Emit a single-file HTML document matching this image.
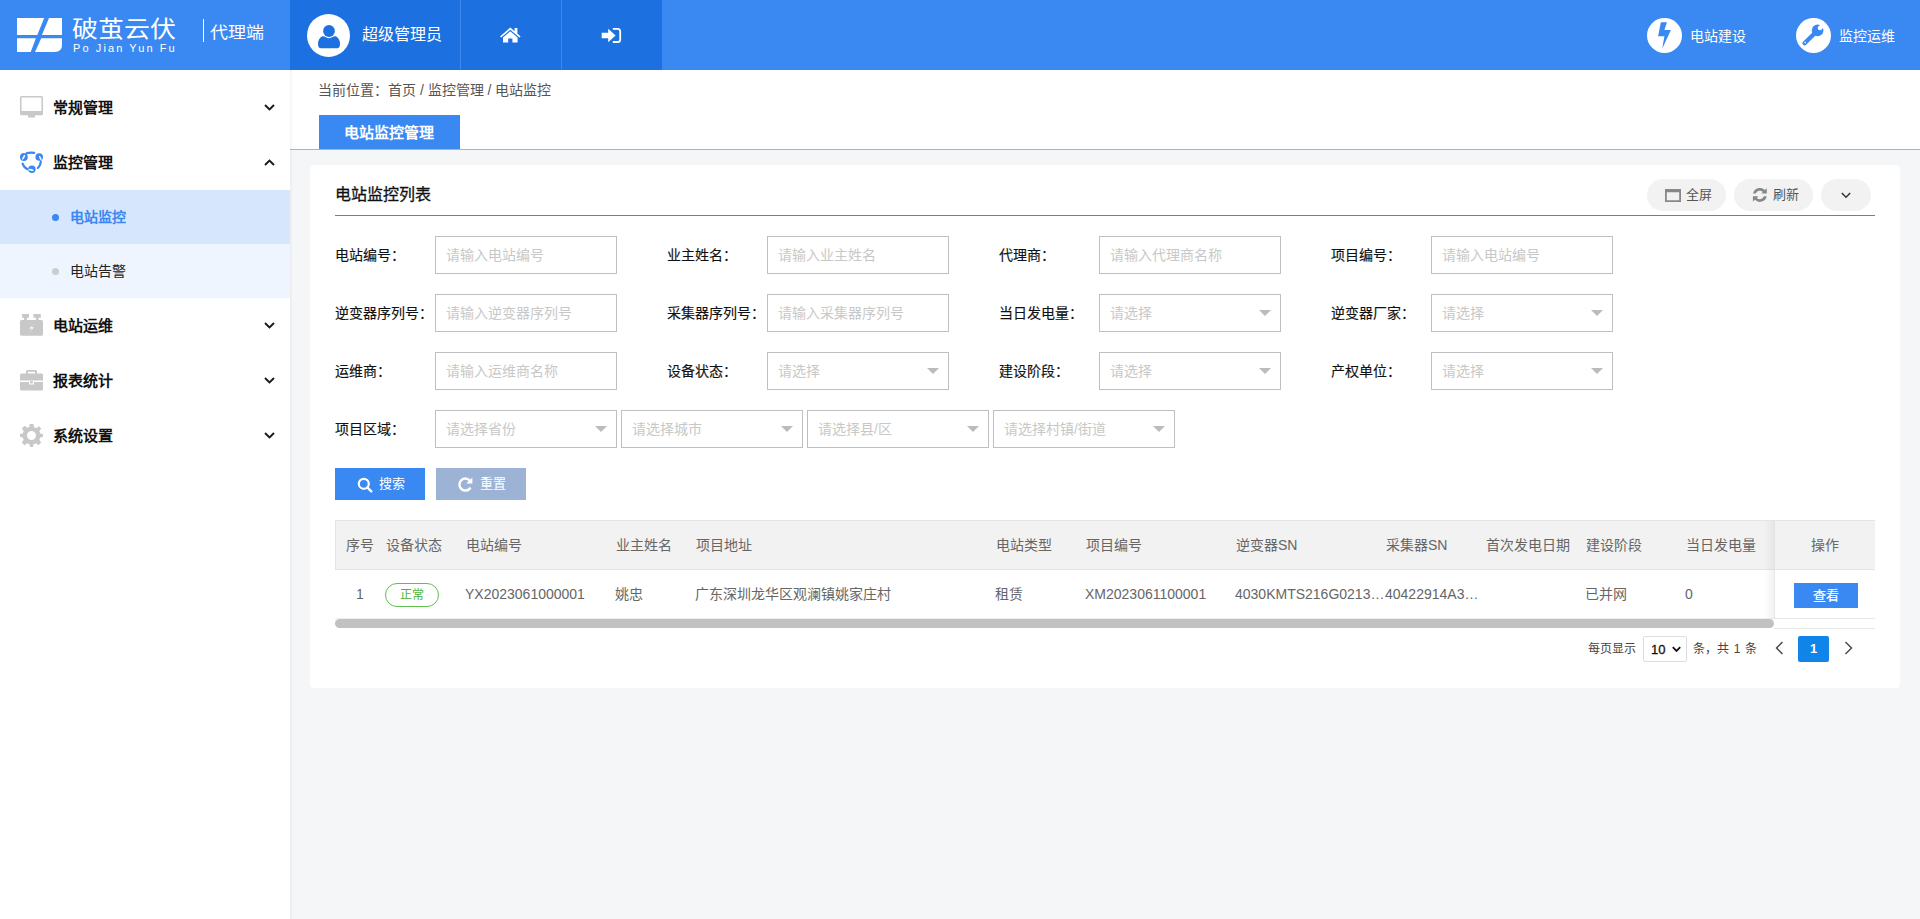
<!DOCTYPE html>
<html lang="zh-CN"><head><meta charset="utf-8">
<style>
*{box-sizing:border-box;margin:0;padding:0}
html,body{width:1920px;height:919px;overflow:hidden;background:#f5f6f8;font-family:"Liberation Sans",sans-serif;}
.abs{position:absolute}
#hdr{position:absolute;left:0;top:0;width:1920px;height:70px;background:#3a88f1}
#hdark{position:absolute;left:290px;top:0;width:372px;height:70px;background:#1c70e0}
.sep{position:absolute;top:0;width:1px;height:70px;background:#3d87ee}
.wt{color:#fff;white-space:nowrap;line-height:1}
#side{position:absolute;left:0;top:70px;width:290px;height:849px;background:#fff}
.mi{position:absolute;left:0;width:290px;height:55px}
.mi .t{position:absolute;left:53px;top:0;line-height:55px;font-size:15px;font-weight:bold;color:#111;white-space:nowrap}
.mi svg.ic{position:absolute;left:20px}
.mi svg.ch{position:absolute;left:264px;top:24px}
.sub{position:absolute;left:0;width:290px;height:54px}
.sub .t{position:absolute;left:70px;top:0;line-height:54px;font-size:14px;white-space:nowrap}
.sub .d{position:absolute;left:52px;top:24px;width:7px;height:7px;border-radius:50%}
#crumb{position:absolute;left:290px;top:70px;width:1630px;height:80px;background:#fff;border-bottom:1px solid #8cb9f4}
#card{position:absolute;left:310px;top:165px;width:1590px;height:523px;background:#fff;border-radius:4px}
.lbl{position:absolute;font-size:14px;color:#111;-webkit-text-stroke:0.15px #111;line-height:14px;white-space:nowrap}
.inp{position:absolute;width:182px;height:38px;border:1px solid #bfbfbf;background:#fff}
.inp span{position:absolute;left:10px;top:0;line-height:36px;font-size:14px;color:#c8c8c8;white-space:nowrap}
.inp i{position:absolute;right:9px;top:15px;width:0;height:0;border-left:6px solid transparent;border-right:6px solid transparent;border-top:6px solid #bbb}
.pill{position:absolute;top:14px;height:32px;border-radius:16px;background:#f2f2f2}
.pill span{position:absolute;top:0;line-height:32px;font-size:13px;color:#555;white-space:nowrap}
.th{position:absolute;top:0;line-height:49px;font-size:14px;color:#666;white-space:nowrap}
.td{position:absolute;top:0;line-height:48px;font-size:14px;color:#666;white-space:nowrap}
</style></head>
<body>
<!-- HEADER -->
<div id="hdr">
  <svg class="abs" style="left:17px;top:18px" width="45" height="34" viewBox="0 0 45 34">
    <path fill="#fff" d="M0 0H27.2L20.3 17H0Z M32 0H45V17H24.9Z M0 20.2H18.9L13.7 34H0Z M24.2 20.2H45V27Q45 34 37.5 34H18Z"/>
  </svg>
  <div class="abs wt" style="left:72px;top:14.4px;font-size:26px;line-height:30px;transform:scaleY(0.86)">破茧云伏</div>
  <div class="abs wt" style="left:73px;top:43px;font-size:11px;letter-spacing:2.1px;line-height:10px">Po Jian Yun Fu</div>
  <div class="abs" style="left:203px;top:19px;width:1px;height:23px;background:#fff"></div>
  <div class="abs wt" style="left:210px;top:21.5px;font-size:18px;line-height:22px;transform:scaleY(0.89)">代理端</div>
</div>
<div id="hdark">
  <div class="sep" style="left:170px"></div>
  <div class="sep" style="left:271px"></div>
</div>
<svg class="abs" style="left:307px;top:14px" width="43" height="43" viewBox="0 0 43 43">
  <circle cx="21.5" cy="21.5" r="21.5" fill="#fff"/>
  <circle cx="22" cy="17" r="5.9" fill="#1c70e0"/>
  <path fill="#1c70e0" d="M15 22.3Q17 22 19 23.3Q22 25 25 23.3Q27 22 29 22.3Q33 25 33 30Q33 34.2 30 34.2H14Q11 34.2 11 30Q11 25 15 22.3Z"/>
</svg>
<div class="abs wt" style="left:362px;top:26px;font-size:16px;line-height:18px">超级管理员</div>
<!-- home -->
<svg class="abs" style="left:500px;top:27px" width="21" height="16" viewBox="0 0 21 16">
  <path fill="#fff" d="M10.3 0.4L0 9.4L1.2 10.6L10.3 2.7L19.4 10.6L20.6 9.4L17.4 6.6V0.9H14.6V4.2Z"/>
  <path fill="#fff" d="M10.3 4.2L3 10.5V15.6H8.2V11.4H12.4V15.6H17.6V10.5Z"/>
</svg>
<!-- sign in -->
<svg class="abs" style="left:601px;top:27px" width="21" height="17" viewBox="0 0 21 17">
  <path fill="#fff" d="M0.7 5.8H7.2V1.7L14.6 8.5L7.2 15.3V11.2H0.7Z"/>
  <path fill="none" stroke="#fff" stroke-width="1.8" d="M11.8 1.8H16.6Q19.2 1.8 19.2 4.4V12.4Q19.2 15 16.6 15H11.8"/>
</svg>
<!-- right header -->
<svg class="abs" style="left:1647px;top:18px" width="35" height="35" viewBox="0 0 35 35">
  <circle cx="17.5" cy="17.5" r="17.5" fill="#fff"/>
  <path fill="#3a88f1" d="M13.9 4.2H19.9L17.4 12H23.9L15.2 30.7L17.4 18.3H11.1Z"/>
</svg>
<div class="abs wt" style="left:1690px;top:29px;font-size:14px;line-height:14px">电站建设</div>
<svg class="abs" style="left:1796px;top:18px" width="35" height="35" viewBox="0 0 35 35">
  <circle cx="17.5" cy="17.5" r="17.5" fill="#fff"/>
  <circle cx="21.6" cy="12.4" r="5.8" fill="#3a88f1"/><path d="M18.5 15.5L8.6 25.2" stroke="#3a88f1" stroke-width="4.4" stroke-linecap="round"/>
  <circle cx="23.9" cy="10.1" r="2.2" fill="#fff"/><path d="M22.4 8.6L25.5 5.5L28.5 8.5L25.4 11.6Z" fill="#fff"/>
  <circle cx="9.2" cy="24.6" r="0.8" fill="#fff"/>
</svg>
<div class="abs wt" style="left:1839px;top:29px;font-size:14px;line-height:14px">监控运维</div>

<!-- SIDEBAR -->
<div id="side">
  <div class="mi" style="top:10px">
    <svg class="ic" style="top:16px" width="23" height="23" viewBox="0 0 23 23">
      <path fill="#c8c8c8" d="M1.5 0H21.5Q23 0 23 1.5V17.8Q23 19.3 21.5 19.3H15V21.5H8V19.3H1.5Q0 19.3 0 17.8V1.5Q0 0 1.5 0ZM1.5 1.5V15H21.5V1.5Z"/>
    </svg>
    <div class="t">常规管理</div>
    <svg class="ch" width="11" height="7" viewBox="0 0 11 7"><path d="M1 1L5.5 5.5L10 1" fill="none" stroke="#1a1a1a" stroke-width="1.9"/></svg>
  </div>
  <div class="mi" style="top:65px">
    <svg class="ic" style="top:16px" width="23" height="23" viewBox="0 0 23 23">
      <g fill="none" stroke="#3a88f1" stroke-width="2.1" stroke-linecap="round">
        <path d="M6.5 2.3Q10 1.3 14.2 1.9"/>
        <path d="M20.8 10.4Q20.6 14.5 17.8 17"/>
        <path d="M2.6 12.6Q3.8 16.6 7.6 18.2"/>
      </g>
      <g fill="#3a88f1">
        <circle cx="3.9" cy="6" r="3.9"/>
        <circle cx="19.2" cy="6" r="3.8"/>
        <circle cx="11.9" cy="18.2" r="3.7"/>
      </g>
      <g fill="#fff">
        <ellipse cx="3.6" cy="6.3" rx="0.85" ry="2.8" transform="rotate(30 3.6 6.3)"/>
        <ellipse cx="20.3" cy="7" rx="0.85" ry="2.4" transform="rotate(-25 20.3 7)"/>
        <ellipse cx="11" cy="18.9" rx="2.6" ry="0.85" transform="rotate(12 11 18.9)"/>
      </g>
    </svg>
    <div class="t">监控管理</div>
    <svg class="ch" width="11" height="7" viewBox="0 0 11 7"><path d="M1 6L5.5 1.5L10 6" fill="none" stroke="#1a1a1a" stroke-width="1.9"/></svg>
  </div>
  <div class="sub" style="top:120px;background:#d5e6fd">
    <div class="d" style="background:#3a88f1"></div>
    <div class="t" style="color:#3a88f1;font-weight:bold">电站监控</div>
  </div>
  <div class="sub" style="top:174px;background:#eef5fe">
    <div class="d" style="background:#ccc"></div>
    <div class="t" style="color:#222">电站告警</div>
  </div>
  <div class="mi" style="top:228px">
    <svg class="ic" style="top:16px" width="23" height="23" viewBox="0 0 23 23">
      <path fill="#c8c8c8" d="M1.5 6H21.5Q23 6 23 7.5V20.3Q23 21.8 21.5 21.8H1.5Q0 21.8 0 20.3V7.5Q0 6 1.5 6Z M2.1 0.1H9V3.8H6.9V6H4.1V3.8H2.1Z M13.4 0.1H20.8V3.8H18.6V6H16V3.8H13.4Z"/>
      <path fill="#fff" d="M14.2 9.7L9.2 14.6H12.2L8.8 19.6L13.9 13.3H11.1Z"/>
    </svg>
    <div class="t">电站运维</div>
    <svg class="ch" width="11" height="7" viewBox="0 0 11 7"><path d="M1 1L5.5 5.5L10 1" fill="none" stroke="#1a1a1a" stroke-width="1.9"/></svg>
  </div>
  <div class="mi" style="top:283px">
    <svg class="ic" style="top:17px" width="23" height="21" viewBox="0 0 23 21">
      <path fill="#c8c8c8" d="M7.5 0H15.5Q17 0 17 1.5V3.5H21.5Q23 3.5 23 5V10.5H0V5Q0 3.5 1.5 3.5H6V1.5Q6 0 7.5 0ZM8 1.7V3.5H15V1.7Z"/>
      <path fill="#c8c8c8" d="M0 12H9V14.5H14V12H23V19Q23 20.5 21.5 20.5H1.5Q0 20.5 0 19Z"/>
      <path fill="#c8c8c8" d="M10.2 11H12.8V13.5H10.2Z"/>
    </svg>
    <div class="t">报表统计</div>
    <svg class="ch" width="11" height="7" viewBox="0 0 11 7"><path d="M1 1L5.5 5.5L10 1" fill="none" stroke="#1a1a1a" stroke-width="1.9"/></svg>
  </div>
  <div class="mi" style="top:338px">
    <svg class="ic" style="top:16px" width="23" height="23" viewBox="0 0 23 23">
      <path fill="#c8c8c8" fill-rule="evenodd" d="M9.5 0H13.5L14 3.2L16.3 4.2L19 2.3L21.2 4.5L19.3 7.2L20.3 9.5L23 10V13L20.3 13.5L19.3 15.8L21.2 18.5L18.5 21.2L15.8 19.3L13.5 20.3L13 23H10L9.5 20.3L7.2 19.3L4.5 21.2L1.8 18.5L3.7 15.8L2.7 13.5L0 13V10L2.7 9.5L3.7 7.2L1.8 4.5L4.5 1.8L7.2 3.7L9.5 2.7Z M11.5 7A4.5 4.5 0 1 0 11.5 16A4.5 4.5 0 1 0 11.5 7Z"/>
    </svg>
    <div class="t">系统设置</div>
    <svg class="ch" width="11" height="7" viewBox="0 0 11 7"><path d="M1 1L5.5 5.5L10 1" fill="none" stroke="#1a1a1a" stroke-width="1.9"/></svg>
  </div>
</div>
<div class="abs" style="left:290px;top:70px;width:3px;height:849px;z-index:5;background:linear-gradient(90deg,rgba(0,0,0,0.045),rgba(0,0,0,0))"></div>

<!-- BREADCRUMB -->
<div id="crumb">
  <div class="abs" style="left:28px;top:13px;font-size:14px;color:#555;line-height:14px;white-space:nowrap">当前位置：首页 / 监控管理 / 电站监控</div>
  <div class="abs" style="left:29px;top:45px;width:141px;height:34px;background:#3a88f1"></div>
  <div class="abs wt" style="left:54px;top:55px;font-size:15px;font-weight:bold;line-height:15px">电站监控管理</div>
</div>

<!-- CARD -->
<div id="card">
  <div class="abs" style="left:25px;top:21px;font-size:16px;line-height:18px;color:#111;-webkit-text-stroke:0.3px #111;white-space:nowrap">电站监控列表</div>
  <div class="abs" style="left:25px;top:50px;width:1540px;height:1px;background:#3a88f1"></div>
  <div class="pill" style="left:1337px;width:79px">
    <svg class="abs" style="left:18px;top:10px" width="16" height="13" viewBox="0 0 16 13"><path fill="#888" d="M0 0H16V13H0ZM1.8 3.2V11.2H14.2V3.2Z"/></svg>
    <span style="left:39px">全屏</span>
  </div>
  <div class="pill" style="left:1424px;width:79px">
    <svg class="abs" style="left:18px;top:9px" width="16" height="15" viewBox="0 0 16 15"><g fill="#888"><path d="M1.02 5.6A6.95 6.95 0 0 1 12.76 1.99L14.8 0.3V5.6H9.4L10.85 3.9A4.25 4.25 0 0 0 3.8 5.6Z"/><path d="M14.68 8.2A6.95 6.95 0 0 1 2.94 11.81L0.9 13.5V8.2H6.3L4.85 9.9A4.25 4.25 0 0 0 11.9 8.2Z"/></g></svg>
    <span style="left:39px">刷新</span>
  </div>
  <div class="pill" style="left:1511px;width:50px">
    <svg class="abs" style="left:20px;top:13px" width="10" height="7" viewBox="0 0 10 7"><path d="M0.8 1L5 5.2L9.2 1" fill="none" stroke="#333" stroke-width="1.5"/></svg>
  </div>
  <div class="lbl" style="left:25px;top:83px">电站编号：</div>
  <div class="inp" style="left:125px;top:71px"><span>请输入电站编号</span></div>
  <div class="lbl" style="left:357px;top:83px">业主姓名：</div>
  <div class="inp" style="left:457px;top:71px"><span>请输入业主姓名</span></div>
  <div class="lbl" style="left:689px;top:83px">代理商：</div>
  <div class="inp" style="left:789px;top:71px"><span>请输入代理商名称</span></div>
  <div class="lbl" style="left:1021px;top:83px">项目编号：</div>
  <div class="inp" style="left:1121px;top:71px"><span>请输入电站编号</span></div>
  <div class="lbl" style="left:25px;top:141px">逆变器序列号：</div>
  <div class="inp" style="left:125px;top:129px"><span>请输入逆变器序列号</span></div>
  <div class="lbl" style="left:357px;top:141px">采集器序列号：</div>
  <div class="inp" style="left:457px;top:129px"><span>请输入采集器序列号</span></div>
  <div class="lbl" style="left:689px;top:141px">当日发电量：</div>
  <div class="inp" style="left:789px;top:129px"><span>请选择</span><i></i></div>
  <div class="lbl" style="left:1021px;top:141px">逆变器厂家：</div>
  <div class="inp" style="left:1121px;top:129px"><span>请选择</span><i></i></div>
  <div class="lbl" style="left:25px;top:199px">运维商：</div>
  <div class="inp" style="left:125px;top:187px"><span>请输入运维商名称</span></div>
  <div class="lbl" style="left:357px;top:199px">设备状态：</div>
  <div class="inp" style="left:457px;top:187px"><span>请选择</span><i></i></div>
  <div class="lbl" style="left:689px;top:199px">建设阶段：</div>
  <div class="inp" style="left:789px;top:187px"><span>请选择</span><i></i></div>
  <div class="lbl" style="left:1021px;top:199px">产权单位：</div>
  <div class="inp" style="left:1121px;top:187px"><span>请选择</span><i></i></div>
  <div class="lbl" style="left:25px;top:257px">项目区域：</div>
  <div class="inp" style="left:125px;top:245px"><span>请选择省份</span><i></i></div>
  <div class="inp" style="left:311px;top:245px"><span>请选择城市</span><i></i></div>
  <div class="inp" style="left:497px;top:245px"><span>请选择县/区</span><i></i></div>
  <div class="inp" style="left:683px;top:245px"><span>请选择村镇/街道</span><i></i></div>
  <div class="abs" style="left:25px;top:303px;width:90px;height:32px;background:#3a88f1">
    <svg class="abs" style="left:22px;top:9px" width="16" height="16" viewBox="0 0 16 16"><circle cx="6.8" cy="6.8" r="5" fill="none" stroke="#fff" stroke-width="2.2"/><path d="M10.3 10.3L14.3 14.3" stroke="#fff" stroke-width="2.4" stroke-linecap="round"/></svg>
    <div class="abs wt" style="left:44px;top:9px;font-size:13px;line-height:14px">搜索</div>
  </div>
  <div class="abs" style="left:126px;top:303px;width:90px;height:32px;background:#9cb3d6">
    <svg class="abs" style="left:21px;top:8px" width="17" height="17" viewBox="0 0 17 17"><path d="M13.4 5.2A6 6 0 1 0 13.6 11.6" fill="none" stroke="#fff" stroke-width="2.4"/><path d="M15.4 1.5V7.6H9.3Z" fill="#fff"/></svg>
    <div class="abs wt" style="left:44px;top:9px;font-size:13px;line-height:14px">重置</div>
  </div>
  <div class="abs" style="left:25px;top:355px;width:1540px;height:50px;background:#f2f2f2;border-top:1px solid #e4e4e4;border-left:1px solid #e4e4e4;border-bottom:1px solid #e4e4e4"></div>
  <div class="th" style="left:25px;top:356px;width:50px;text-align:center">序号</div>
  <div class="th" style="left:76px;top:356px">设备状态</div>
  <div class="th" style="left:156px;top:356px">电站编号</div>
  <div class="th" style="left:306px;top:356px">业主姓名</div>
  <div class="th" style="left:386px;top:356px">项目地址</div>
  <div class="th" style="left:686px;top:356px">电站类型</div>
  <div class="th" style="left:776px;top:356px">项目编号</div>
  <div class="th" style="left:926px;top:356px">逆变器SN</div>
  <div class="th" style="left:1076px;top:356px">采集器SN</div>
  <div class="th" style="left:1176px;top:356px">首次发电日期</div>
  <div class="th" style="left:1276px;top:356px">建设阶段</div>
  <div class="th" style="left:1376px;top:356px">当日发电量</div>
  <div class="td" style="left:25px;top:405px;width:50px;text-align:center">1</div>
  <div class="abs" style="left:75px;top:418px;width:54px;height:24px;border:1px solid #5fc04a;border-radius:12px;color:#4cb536;font-size:12px;line-height:22px;text-align:center">正常</div>
  <div class="td" style="left:155px;top:405px;width:150px;overflow:hidden;text-overflow:ellipsis">YX2023061000001</div>
  <div class="td" style="left:305px;top:405px;width:80px;overflow:hidden;text-overflow:ellipsis">姚忠</div>
  <div class="td" style="left:385px;top:405px;width:300px;overflow:hidden;text-overflow:ellipsis">广东深圳龙华区观澜镇姚家庄村</div>
  <div class="td" style="left:685px;top:405px;width:90px;overflow:hidden;text-overflow:ellipsis">租赁</div>
  <div class="td" style="left:775px;top:405px;width:150px;overflow:hidden;text-overflow:ellipsis">XM2023061100001</div>
  <div class="td" style="left:925px;top:405px;width:150px;overflow:hidden;text-overflow:ellipsis">4030KMTS216G0213456</div>
  <div class="td" style="left:1075px;top:405px;width:100px;overflow:hidden;text-overflow:ellipsis">40422914A3BCD</div>
  <div class="td" style="left:1175px;top:405px;width:100px;overflow:hidden;text-overflow:ellipsis"></div>
  <div class="td" style="left:1275px;top:405px;width:100px;overflow:hidden;text-overflow:ellipsis">已并网</div>
  <div class="td" style="left:1375px;top:405px;width:100px;overflow:hidden;text-overflow:ellipsis">0</div>
  <div class="abs" style="left:25px;top:453px;width:1540px;height:1px;background:#eee"></div>
  <div class="abs" style="left:25px;top:454px;width:1439px;height:9px;border-radius:4.5px;background:#c1c1c1"></div>
  <div class="abs" style="left:1464px;top:463px;width:101px;height:1px;background:#e8e8e8"></div>
  <div class="abs" style="left:1454px;top:356px;width:10px;height:98px;background:linear-gradient(90deg,rgba(0,0,0,0),rgba(0,0,0,0.05))"></div>
  <div class="abs" style="left:1464px;top:355px;width:101px;height:99px;background:#fff;border-left:1px solid #e8e8e8">
    <div class="abs" style="left:-1px;top:0;width:101px;height:50px;background:#f2f2f2;border-top:1px solid #e4e4e4;border-bottom:1px solid #e4e4e4;border-left:1px solid #e4e4e4"></div>
    <div class="th" style="left:-1px;top:1px;width:101px;text-align:center">操作</div>
    <div class="abs" style="left:-1px;top:98px;width:101px;height:1px;background:#e8e8e8"></div>
    <div class="abs wt" style="left:20px;top:228px;"></div>
    <div class="abs" style="left:19px;top:63px;width:64px;height:25px;background:#3a88f1;color:#fff;font-size:13px;line-height:25px;text-align:center;-webkit-text-stroke:0.2px #fff">查看</div>
  </div>
  <div class="abs" style="left:1278px;top:478px;font-size:12px;color:#444;line-height:12px;white-space:nowrap">每页显示</div>
  <div class="abs" style="left:1333px;top:471px;width:44px;height:26px;border:1px solid #ddd;border-radius:2px;background:#fff">
    <div class="abs" style="left:7px;top:0;line-height:25px;font-size:13px;color:#111;-webkit-text-stroke:0.3px #111">10</div>
    <svg class="abs" style="left:28px;top:9px" width="9" height="7" viewBox="0 0 9 7"><path d="M0.8 1.2L4.5 4.9L8.2 1.2" fill="none" stroke="#111" stroke-width="1.8"/></svg>
  </div>
  <div class="abs" style="left:1383px;top:478px;font-size:12px;color:#444;line-height:12px;white-space:nowrap;word-spacing:1.5px">条，共 1 条</div>
  <svg class="abs" style="left:1465px;top:476px" width="9" height="14" viewBox="0 0 9 14"><path d="M7.5 1L1.5 7L7.5 13" fill="none" stroke="#444" stroke-width="1.4"/></svg>
  <div class="abs" style="left:1488px;top:471px;width:31px;height:26px;background:#1184e8;border-radius:2px;color:#fff;font-size:13px;line-height:26px;text-align:center;font-weight:bold">1</div>
  <svg class="abs" style="left:1534px;top:476px" width="9" height="14" viewBox="0 0 9 14"><path d="M1.5 1L7.5 7L1.5 13" fill="none" stroke="#444" stroke-width="1.4"/></svg>
</div>
</body></html>
